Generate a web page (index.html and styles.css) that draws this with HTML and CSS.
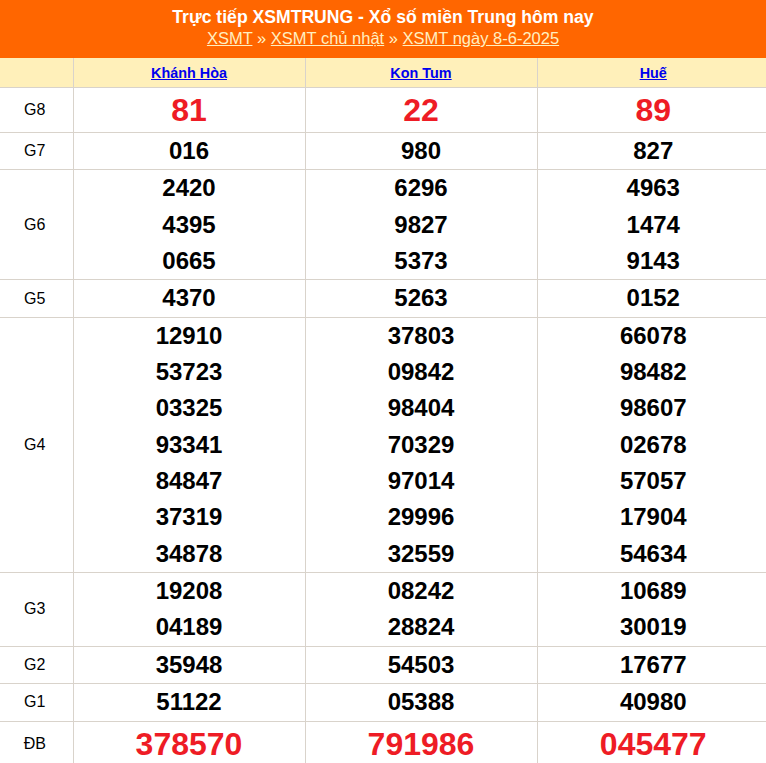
FILE: index.html
```html
<!DOCTYPE html>
<html lang="vi">
<head>
<meta charset="utf-8">
<title>XSMT</title>
<link rel="stylesheet" href="styles.css">
</head>
<body>
<div class="box">
  <div class="head">
    <h1 class="title">Trực tiếp XSMTRUNG - Xổ số miền Trung hôm nay</h1>
    <div class="crumbs"><a href="#">XSMT</a> » <a href="#">XSMT chủ nhật</a> » <a href="#">XSMT ngày 8-6-2025</a></div>
  </div>
  <table class="kq">
    <colgroup><col class="c0"><col class="c1"><col class="c1"><col class="c1"></colgroup>
    <thead>
      <tr><th></th><th><a href="#">Khánh Hòa</a></th><th><a href="#">Kon Tum</a></th><th><a href="#">Huế</a></th></tr>
    </thead>
    <tbody>
      <tr class="g8"><td class="lb">G8</td><td><div class="n big">81</div></td><td><div class="n big">22</div></td><td><div class="n big">89</div></td></tr>
      <tr><td class="lb">G7</td><td><div class="n">016</div></td><td><div class="n">980</div></td><td><div class="n">827</div></td></tr>
      <tr><td class="lb">G6</td>
        <td><div class="n">2420</div><div class="n">4395</div><div class="n">0665</div></td>
        <td><div class="n">6296</div><div class="n">9827</div><div class="n">5373</div></td>
        <td><div class="n">4963</div><div class="n">1474</div><div class="n">9143</div></td></tr>
      <tr><td class="lb">G5</td><td><div class="n">4370</div></td><td><div class="n">5263</div></td><td><div class="n">0152</div></td></tr>
      <tr><td class="lb">G4</td>
        <td><div class="n">12910</div><div class="n">53723</div><div class="n">03325</div><div class="n">93341</div><div class="n">84847</div><div class="n">37319</div><div class="n">34878</div></td>
        <td><div class="n">37803</div><div class="n">09842</div><div class="n">98404</div><div class="n">70329</div><div class="n">97014</div><div class="n">29996</div><div class="n">32559</div></td>
        <td><div class="n">66078</div><div class="n">98482</div><div class="n">98607</div><div class="n">02678</div><div class="n">57057</div><div class="n">17904</div><div class="n">54634</div></td></tr>
      <tr><td class="lb">G3</td>
        <td><div class="n">19208</div><div class="n">04189</div></td>
        <td><div class="n">08242</div><div class="n">28824</div></td>
        <td><div class="n">10689</div><div class="n">30019</div></td></tr>
      <tr><td class="lb">G2</td><td><div class="n">35948</div></td><td><div class="n">54503</div></td><td><div class="n">17677</div></td></tr>
      <tr><td class="lb">G1</td><td><div class="n">51122</div></td><td><div class="n">05388</div></td><td><div class="n">40980</div></td></tr>
      <tr class="db"><td class="lb">ĐB</td><td><div class="n big">378570</div></td><td><div class="n big">791986</div></td><td><div class="n big">045477</div></td></tr>
    </tbody>
  </table>
</div>
</body>
</html>
```

FILE: styles.css
```css
html, body {
  margin: 0;
  padding: 0;
  background: #fff;
  font-family: "Liberation Sans", Arial, sans-serif;
}
.box {
  width: 766px;
  overflow: hidden;
}
.head {
  background: #ff6600;
  height: 58px;
  box-sizing: border-box;
  padding-top: 7px;
  text-align: center;
}
.title {
  margin: 0;
  font-size: 17.6px;
  line-height: 21px;
  font-weight: bold;
  color: #fff;
}
.crumbs {
  font-size: 16.5px;
  line-height: 20px;
  color: #fff3c8;
}
.crumbs a {
  color: #ffefc0;
  text-decoration: underline;
}
.kq {
  width: 769px;
  border-collapse: collapse;
  table-layout: fixed;
}
.c0 { width: 73px; }
.c1 { width: 232px; }
.kq th, .kq td {
  border: 1px solid #d9d3cb;
  padding: 0;
  text-align: center;
  vertical-align: middle;
}
.kq tr > :first-child { border-left: none; }
.kq tr > :last-child { border-right: none; }
.kq thead tr > * { border-top: none; }
.kq th {
  background: #fff0ba;
  height: 29px;
  font-size: 14.4px;
  font-weight: bold;
}
.kq th a {
  color: #0000ee;
  text-decoration: underline;
}
.kq .lb {
  font-size: 16px;
  color: #000;
  padding-right: 3px;
}
.n {
  font-size: 24px;
  font-weight: bold;
  line-height: 36.35px;
  color: #000;
}
.n.big {
  font-size: 32px;
  line-height: 44px;
  color: #ee1c25;
}
```
